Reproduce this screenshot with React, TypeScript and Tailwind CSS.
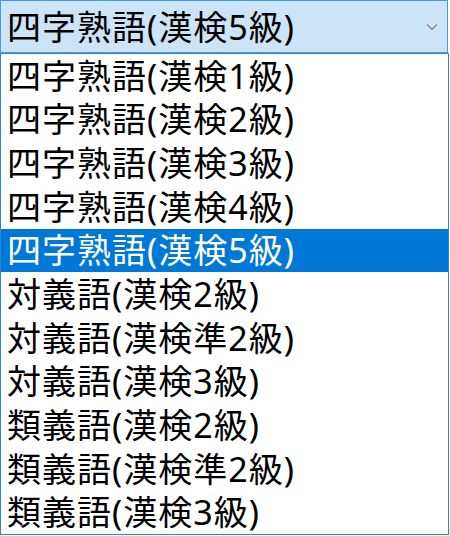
import React from "react";

const items = [
  "四字熟語(漢検1級)",
  "四字熟語(漢検2級)",
  "四字熟語(漢検3級)",
  "四字熟語(漢検4級)",
  "四字熟語(漢検5級)",
  "対義語(漢検2級)",
  "対義語(漢検準2級)",
  "対義語(漢検3級)",
  "類義語(漢検2級)",
  "類義語(漢検準2級)",
  "類義語(漢検3級)",
];

export default function App() {
  const selected = 4;
  return (
    <div
      className="w-[450px] h-[536px] bg-white flex flex-col text-black"
      style={{ fontFamily: '"Noto Sans", "Noto Sans CJK JP", sans-serif' }}
    >
      <div className="w-[448px] h-[53px] shrink-0 border-[1.5px] border-[#4a9ae0] bg-[#cce4f7] flex items-center pl-[6px] pr-[9px]">
        <span className="flex-1 text-[34px] leading-none tracking-[1px]">{items[selected]}</span>
        <svg width="12" height="8" viewBox="0 0 12 8" className="shrink-0">
          <path d="M1 1.5 L6 6.5 L11 1.5" fill="none" stroke="#7a7f86" strokeWidth="1.2" />
        </svg>
      </div>
      <div className="w-[449px] h-[482px] border border-[#2b86d6] flex flex-col">
        {items.map((t, i) => (
          <div
            key={t}
            className={
              "flex-1 flex items-center pl-[6px] text-[34px] leading-none tracking-[1px] " +
              (i === selected ? "bg-[#0078d7] text-white" : "bg-white text-black")
            }
          >
            {t}
          </div>
        ))}
      </div>
    </div>
  );
}
